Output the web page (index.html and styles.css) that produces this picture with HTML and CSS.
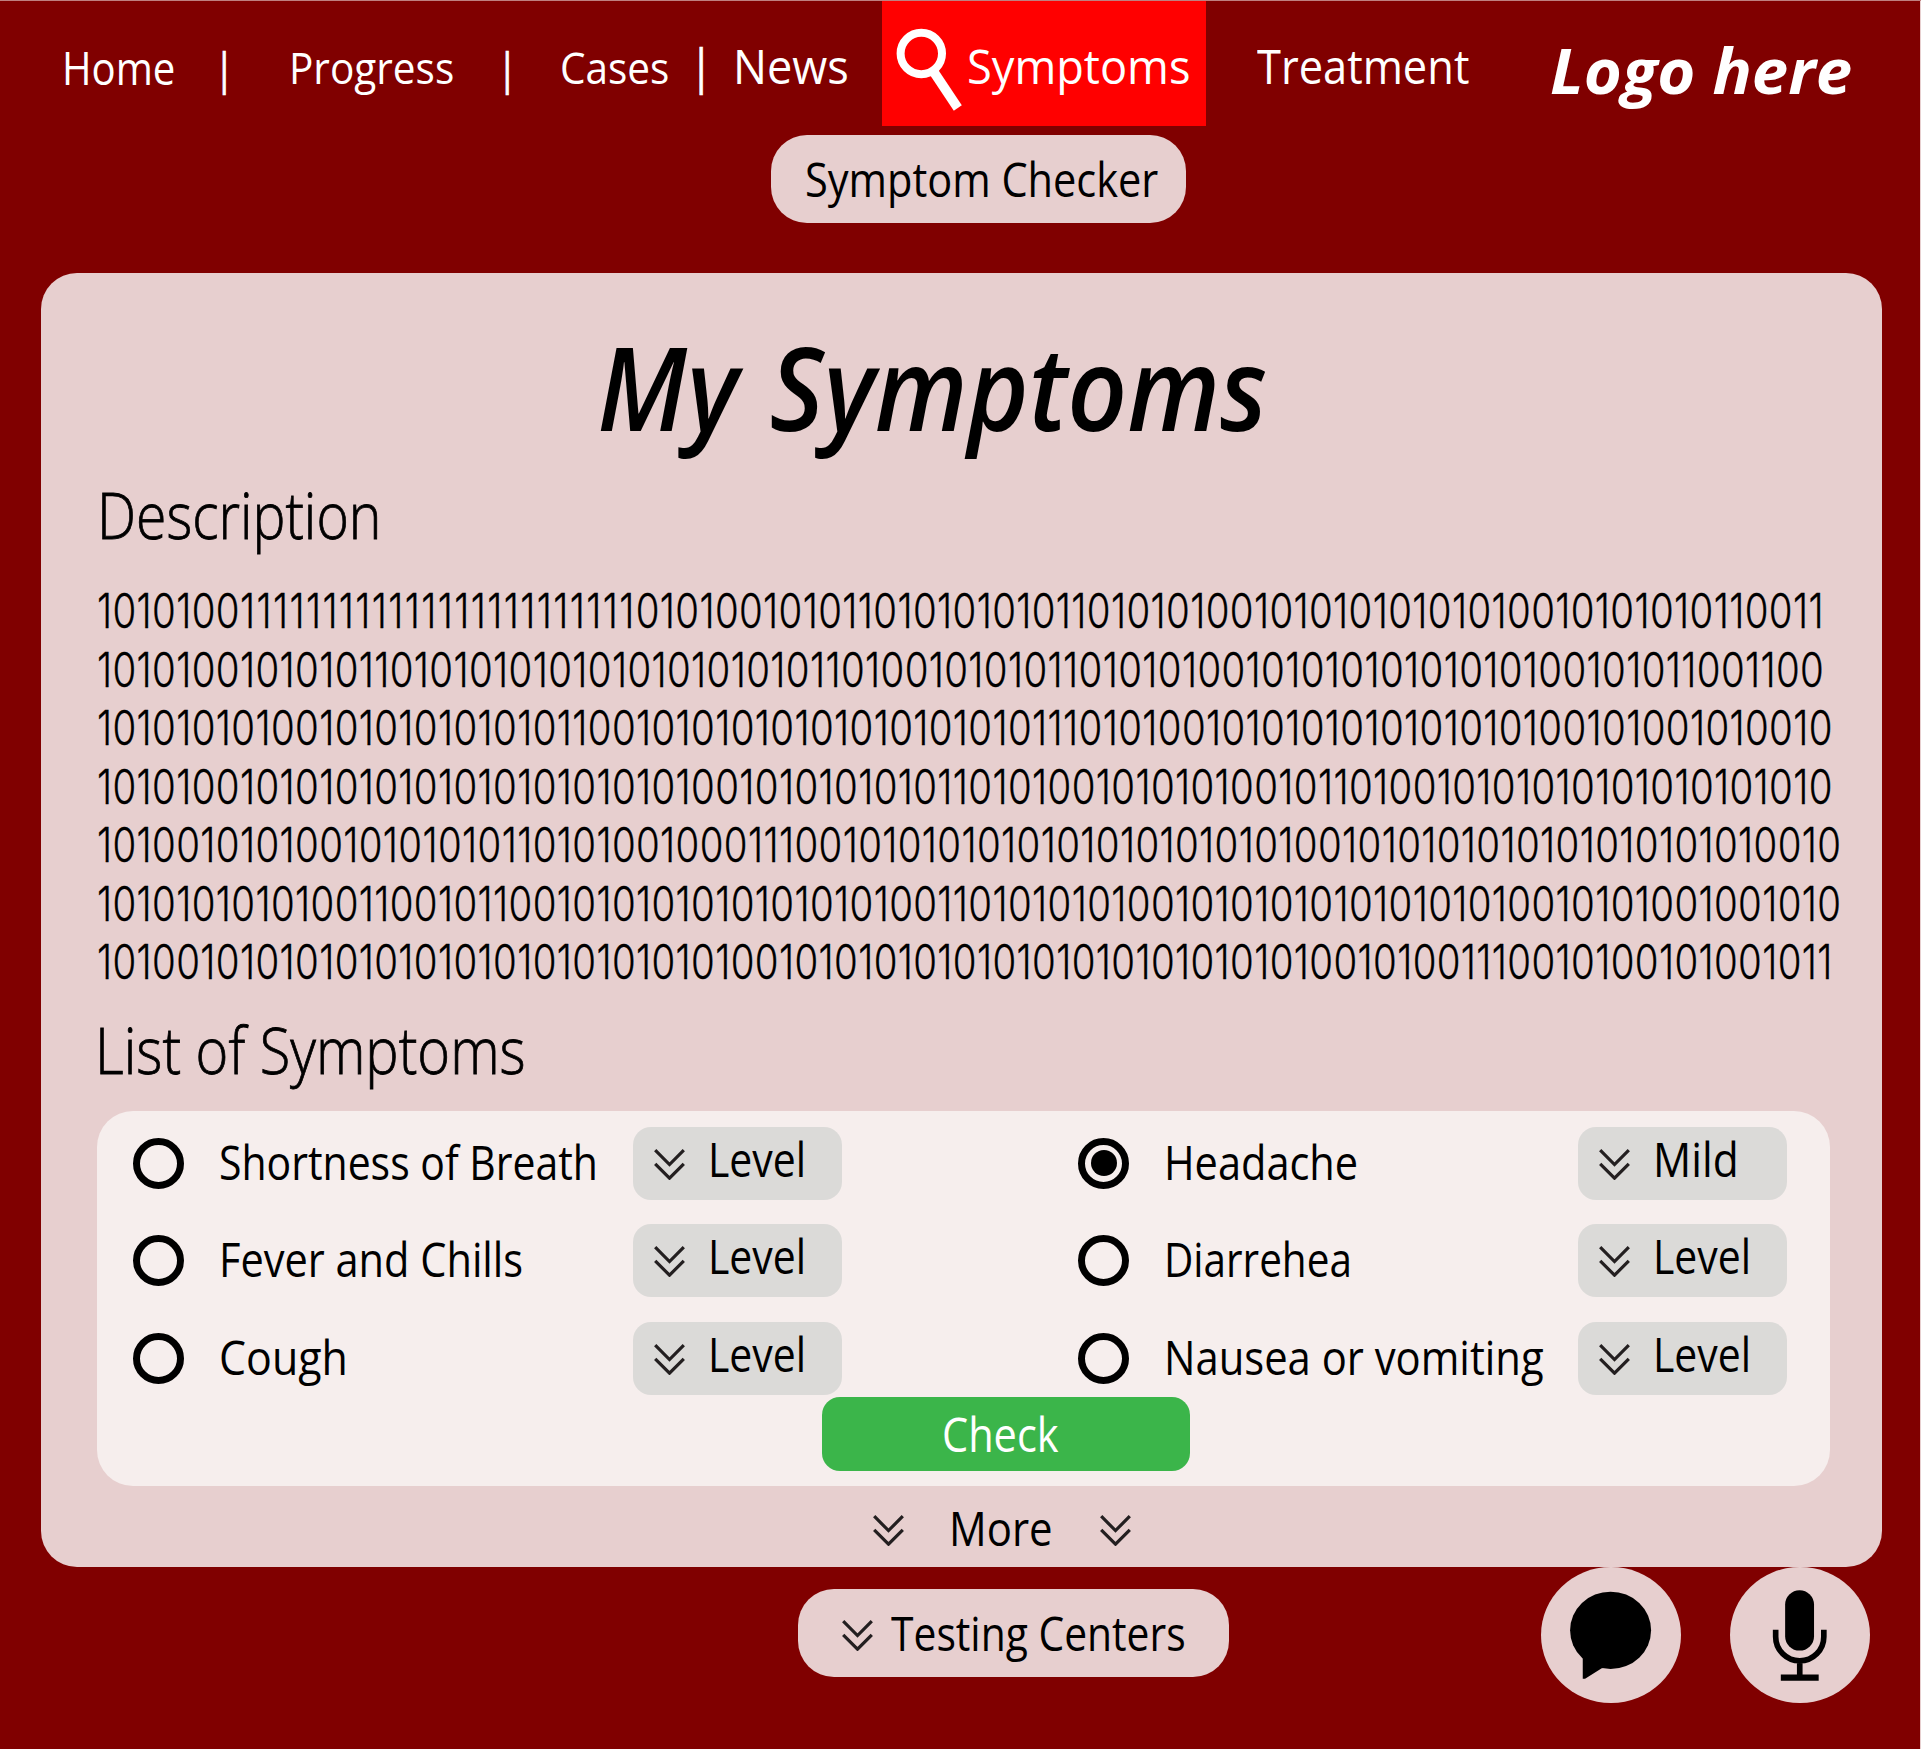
FILE: index.html
```
<!DOCTYPE html>
<html lang="en">
<head>
<meta charset="utf-8">
<title>My Symptoms</title>
<link rel="stylesheet" href="styles.css">
</head>
<body>
<svg class="defs" width="0" height="0" aria-hidden="true">
  <symbol id="chevrons" viewBox="0 0 31 31"><path d="M1.2 1.2 15.5 15.6 29.8 1.2M1.2 14.8 15.5 29.2 29.8 14.8" fill="none" stroke="#231f20" stroke-width="3.2"/></symbol>
</svg>

<nav class="nav">
  <a class="nav-link home">Home</a>
  <span class="nav-link pipe">|</span>
  <a class="nav-link progress">Progress</a>
  <span class="nav-link pipe">|</span>
  <a class="nav-link cases">Cases</a>
  <span class="nav-link pipe tall">|</span>
  <a class="nav-link news">News</a>
  <a class="tab">
    <svg class="search" viewBox="0 0 70 84"><circle cx="25.3" cy="25.5" r="20.7" fill="none" stroke="#fff" stroke-width="8"/><path d="M36.5 42 61.8 80" stroke="#fff" stroke-width="9.6"/></svg>
    <span class="nav-link symptoms">Symptoms</span>
  </a>
  <a class="nav-link treatment">Treatment</a>
  <span class="nav-link logo">Logo here</span>
</nav>

<a class="pill checker"><span class="text">Symptom Checker</span></a>

<main class="panel">
  <h1 class="title">My Symptoms</h1>
  <h2 class="heading description">Description</h2>
  <div class="digits">
    <p>1010100<span class="ones">111111111111111111111111</span>010100101011010101010110101010010101010101010010101010110011</p>
    <p>101010010101011010101010101010101010110100101010110101010010101010101010100101011001100</p>
    <p>101010101001010101010101100101010101010101010101110101001010101010101010100101001010010</p>
    <p>101010010101010101010101010101001010101010110101001010101001011010010101010101010101010</p>
    <p>101001010100101010101101010010001110010101010101010101010101001010101010101010101010010</p>
    <p>101010101010011001011001010101010101010100110101010100101010101010101010010101001001010</p>
    <p>101001010101010101010101010101010010101010101010101010101010100101001110010100101001011</p>
  </div>
  <h2 class="heading list">List of Symptoms</h2>

  <section class="card">
    <div class="options">
      <div class="option"><i class="radio"></i><span class="label narrow">Shortness of Breath</span><span class="level"><svg class="chev"><use href="#chevrons"/></svg><span class="text">Level</span></span></div>
      <div class="option"><i class="radio on"></i><span class="label">Headache</span><span class="level"><svg class="chev"><use href="#chevrons"/></svg><span class="text mild">Mild</span></span></div>
      <div class="option"><i class="radio"></i><span class="label">Fever and Chills</span><span class="level"><svg class="chev"><use href="#chevrons"/></svg><span class="text">Level</span></span></div>
      <div class="option"><i class="radio"></i><span class="label diarrhea">Diarrehea</span><span class="level"><svg class="chev"><use href="#chevrons"/></svg><span class="text">Level</span></span></div>
      <div class="option"><i class="radio"></i><span class="label cough">Cough</span><span class="level"><svg class="chev"><use href="#chevrons"/></svg><span class="text">Level</span></span></div>
      <div class="option"><i class="radio"></i><span class="label nausea">Nausea or vomiting</span><span class="level"><svg class="chev"><use href="#chevrons"/></svg><span class="text">Level</span></span></div>
    </div>
    <a class="check"><span class="text">Check</span></a>
  </section>

  <div class="more"><svg class="chev"><use href="#chevrons"/></svg><span class="text">More</span><svg class="chev"><use href="#chevrons"/></svg></div>
</main>

<footer class="footer">
  <a class="pill centers"><svg class="chev"><use href="#chevrons"/></svg><span class="text">Testing Centers</span></a>
  <a class="round chat"><svg viewBox="123 81 418 408"><ellipse cx="331.5" cy="271" rx="121.5" ry="116"/><path d="M248 340V416H255L305 385 330 380Z"/></svg></a>
  <a class="round mic"><svg viewBox="690 81 420 408"><rect x="856" y="150" width="87" height="182" rx="43.5"/><path d="M827.5 269V290A72.5 72.5 0 0 0 972.5 290V269M900 362V414" fill="none" stroke="#000" stroke-width="17"/><path d="M843 404H957V423H843Z"/></svg></a>
</footer>
</body>
</html>
```
FILE: styles.css
```
* { box-sizing: border-box; }
body {
  margin: 0;
  width: 1921px;
  height: 1749px;
  overflow: hidden;
  background: #800000;
  box-shadow: inset 0 1px #bf8080, inset -1px 0 #e7cfcf;
  color: #000;
  font: 48px "Open Sans", "Noto Sans", sans-serif;
}
.defs { display: block; }
.chev { display: block; flex: none; width: 31px; height: 31px; }
.nav-link, .text, .title, .heading, .label, .digits p {
  display: block;
  white-space: nowrap;
  transform-origin: 0 0;
  transform: scaleX(.865);
}

.nav {
  display: grid;
  grid-template-columns: 152.7px 75px 208px 62.9px 129.7px 43.3px 148.9px 324px 51px 293px 1fr;
  height: 126px;
  padding-left: 61.5px;
  color: #fff;
}
.home { font-size: 46px; line-height: 134px; transform: scaleX(.872); }
.progress, .cases { font-size: 43px; line-height: 136.4px; transform: scaleX(.942); }
.news, .symptoms { font-size: 47px; line-height: 133px; transform: scaleX(.961); }
.treatment { grid-column: 10; font-size: 47px; line-height: 133px; transform: scaleX(.924); }
.pipe { font-size: 44px; line-height: 134.5px; transform: scaleX(.85); -webkit-text-stroke: .7px; }
.pipe.tall { font-size: 48px; line-height: 132px; }
.logo { font-size: 63px; font-style: italic; font-weight: 700; line-height: 140px; transform: scaleX(1.036); }
.tab { display: flex; height: 125px; margin-top: 1px; padding-left: 14px; background: #f00; }
.tab .symptoms { margin: -1px 0 0 1px; }
.search { flex: none; width: 70px; height: 84px; margin-top: 27px; }

.pill { display: flex; height: 88px; border-radius: 36px; background: #e7cfcf; }
.checker { width: 415px; margin: 8.6px 0 0 771px; padding-left: 34.3px; }
.checker .text { line-height: 88px; }

.panel {
  width: 1841px;
  height: 1294px;
  margin: 50.4px 0 0 41px;
  border-radius: 36px;
  background: #e7cfcf;
}
.title {
  margin: 0;
  padding: 71px 0 0 556.3px;
  font-size: 116px;
  font-weight: 600;
  font-style: italic;
  line-height: 84px;
  word-spacing: 5px;
  transform-origin: 556.3px 0;
  transform: scaleX(.9);
}
.heading { margin: 0; font-size: 64px; font-weight: 300; line-height: 80px; -webkit-text-stroke: .8px; }
.description { padding-top: 47.4px; margin-left: 55.8px; transform: scaleX(.864); }
.digits { margin: 27px 0 0 56px; font: 300 48px/58.5px Inter, "Open Sans", sans-serif; letter-spacing: .485px; -webkit-text-stroke: .3px; }
.digits p { margin: 0; transform: scaleX(.8); }
.ones { letter-spacing: 1.72px; }
.list { margin: 18.3px 0 0 54.3px; transform: scaleX(.874); }

.card {
  width: 1733px;
  height: 375px;
  margin: 20.5px 0 0 56px;
  padding: 16px 0 0 36px;
  border-radius: 36px;
  background: #f6eeed;
}
.options { display: grid; grid-template-columns: 709px 709px; column-gap: 236px; grid-auto-rows: 73px; row-gap: 24.6px; }
.option { display: grid; grid-template-columns: 86px 414px 209px; }
.radio { display: grid; place-content: center; width: 51px; height: 51px; margin-top: 11px; border: 7px solid #000; border-radius: 50%; }
.radio.on::after { content: ""; width: 26px; height: 26px; border-radius: 50%; background: #000; }
.label { line-height: 70px; }
.narrow { transform: scaleX(.853); }
.diarrhea { transform: scaleX(.843); }
.nausea { transform: scaleX(.87); }
.cough { transform: scaleX(.895); }
.level { display: flex; gap: 22.6px; padding-left: 21px; border-radius: 18px; background: #dbdad8; }
.level .chev { margin-top: 22px; }
.level .text { line-height: 64.6px; transform: scaleX(.853); }
.level .mild { transform: scaleX(.885); }
.check { display: flex; width: 368px; height: 73.5px; margin: 2.4px 0 0 689px; padding-left: 119.8px; border-radius: 18px; background: #3bb54a; color: #fff; }
.check .text { line-height: 73px; }

.more { display: flex; margin-left: 832px; }
.more .chev { margin-top: 29px; }
.more .text { width: 151px; margin-left: 44.6px; line-height: 84px; transform: scaleX(.873); }

.footer { display: flex; padding-left: 798px; }
.centers { width: 431px; margin-top: 22px; padding-left: 44px; }
.centers .chev { margin-top: 31px; }
.centers .text { margin-left: 18px; line-height: 88px; transform: scaleX(.85); }
.round { width: 139.5px; height: 136px; border-radius: 50%; background: #e7cfcf; }
.round svg { display: block; width: 100%; height: 100%; }
.chat { margin-left: 312px; }
.mic { margin-left: 49.5px; }
```
